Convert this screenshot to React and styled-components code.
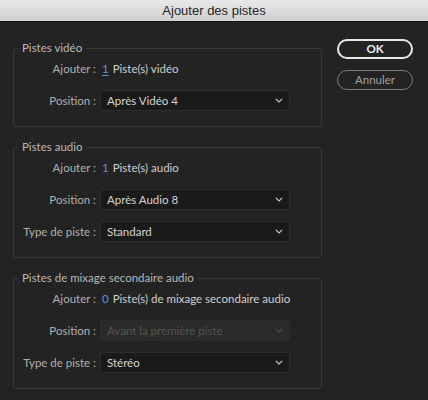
import styled, { createGlobalStyle } from "styled-components"

const GlobalStyle = createGlobalStyle`
    html, body {
        margin: 0;
        padding: 0;
        background: #232323;
    }

    body {
        font-family: Lato, "Noto Sans", sans-serif;
        font-size: 11.5px;
        color: #c4c4c4;
    }
`

const Dialog = styled.div`
    width: 428px;
    height: 400px;
    background: #232323;
    overflow: hidden;
`

const TitleBar = styled.div`
    height: 22px;
    box-sizing: border-box;
    display: flex;
    align-items: center;
    justify-content: center;
    background: linear-gradient(#e9e9e9, #d0d0d0);
    border-bottom: 1px solid #151515;
    font-family: "Liberation Sans", Arial, sans-serif;
    font-size: 13px;
    color: #262626;
    user-select: none;
`

const Body = styled.div`
    display: flex;
    align-items: flex-start;
    gap: 15px;
    padding: 17px 0 0 13px;
`

const Groups = styled.div`
    width: 309px;
    display: flex;
    flex-direction: column;
    gap: 13px;
    padding-top: 2px;
`

const Group = styled.fieldset`
    margin: 0;
    padding: 3px 0 15px 0;
    border: 1px solid #383838;
    border-radius: 3px;
    display: grid;
    grid-template-columns: 82px 190px;
    column-gap: 4px;
    row-gap: 11px;
    align-items: center;

    legend {
        margin-left: 4px;
        padding: 0 4px;
        line-height: 14px;
        color: #b8b8b8;
    }
`

const Label = styled.span`
    text-align: right;
    color: #b0b0b0;
    white-space: nowrap;
`

const Value = styled.div`
    height: 21px;
    display: flex;
    align-items: center;
    gap: 4px;
    padding-left: 2px;
    white-space: nowrap;
    color: #cfcfcf;
`

const Count = styled.span`
    color: #5b98d6;
    text-decoration: ${(p) => (p.$underline ? "underline" : "none")};
    text-underline-offset: 2px;
`

const Select = styled.div`
    height: 21px;
    box-sizing: border-box;
    display: flex;
    align-items: center;
    justify-content: space-between;
    padding: 0 6px 0 6px;
    border: 1px solid ${(p) => (p.$disabled ? "#2c2c2c" : "#2e2e2e")};
    border-radius: 2px;
    background: ${(p) => (p.$disabled ? "#2a2a2a" : "#1a1a1a")};
    color: ${(p) => (p.$disabled ? "#555555" : "#d4d4d4")};

    svg {
        flex: none;
        stroke: ${(p) => (p.$disabled ? "#4e4e4e" : "#c8c8c8")};
    }
`

const Buttons = styled.div`
    display: flex;
    flex-direction: column;
    gap: 11px;
`

const Button = styled.button`
    width: 76px;
    height: 20px;
    box-sizing: border-box;
    border-radius: 10px;
    background: transparent;
    font-family: Lato, "Noto Sans", sans-serif;
    font-size: 11.5px;
    font-weight: ${(p) => (p.$primary ? 700 : 400)};
    line-height: 1;
    padding: 0;
    border: ${(p) => (p.$primary ? "2px solid #e8e8e8" : "1.5px solid #7a7a7a")};
    color: ${(p) => (p.$primary ? "#f2f2f2" : "#a0a0a0")};
`

function Chevron() {
    return (
        <svg width="8" height="5" viewBox="0 0 8 5" fill="none" strokeWidth="1.2">
            <path d="M0.8 0.8l3.2 3.2 3.2-3.2" />
        </svg>
    )
}

function Row({ label, children }) {
    return (
        <>
            <Label>{label}</Label>
            {children}
        </>
    )
}

function Dropdown({ value, disabled }) {
    return (
        <Select $disabled={disabled}>
            <span>{value}</span>
            <Chevron />
        </Select>
    )
}

export default function App() {
    return (
        <Dialog>
            <GlobalStyle />
            <TitleBar>Ajouter des pistes</TitleBar>
            <Body>
                <Groups>
                    <Group>
                        <legend>Pistes vidéo</legend>
                        <Row label="Ajouter :">
                            <Value><Count $underline>1</Count>Piste(s) vidéo</Value>
                        </Row>
                        <Row label="Position :">
                            <Dropdown value="Après Vidéo 4" />
                        </Row>
                    </Group>
                    <Group>
                        <legend>Pistes audio</legend>
                        <Row label="Ajouter :">
                            <Value><Count>1</Count>Piste(s) audio</Value>
                        </Row>
                        <Row label="Position :">
                            <Dropdown value="Après Audio 8" />
                        </Row>
                        <Row label="Type de piste :">
                            <Dropdown value="Standard" />
                        </Row>
                    </Group>
                    <Group>
                        <legend>Pistes de mixage secondaire audio</legend>
                        <Row label="Ajouter :">
                            <Value><Count>0</Count>Piste(s) de mixage secondaire audio</Value>
                        </Row>
                        <Row label="Position :">
                            <Dropdown value="Avant la première piste" disabled />
                        </Row>
                        <Row label="Type de piste :">
                            <Dropdown value="Stéréo" />
                        </Row>
                    </Group>
                </Groups>
                <Buttons>
                    <Button $primary>OK</Button>
                    <Button>Annuler</Button>
                </Buttons>
            </Body>
        </Dialog>
    )
}
